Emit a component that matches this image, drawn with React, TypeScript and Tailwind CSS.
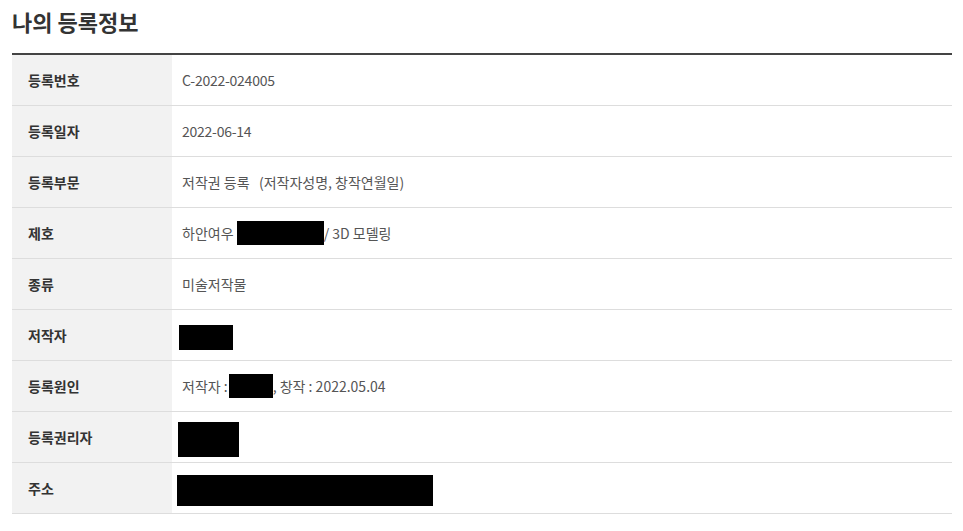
const FONT = { fontFamily: '"Noto Sans CJK KR", "Noto Sans", sans-serif' };

function Blk({ w, h, className = "" }: { w: string; h: string; className?: string }) {
  return <span className={`inline-block bg-black align-middle ${w} ${h} ${className}`} />;
}

const ROWS: { label: string; value: React.ReactNode }[] = [
  { label: "등록번호", value: <span className="tracking-[-0.25px]">C-2022-024005</span> },
  { label: "등록일자", value: <span className="tracking-[-0.25px]">2022-06-14</span> },
  { label: "등록부문", value: <span className="whitespace-pre">저작권 등록   (저작자성명, 창작연월일)</span> },
  {
    label: "제호",
    value: (
      <span className="flex items-center">
        하안여우&nbsp;<Blk w="w-[87px]" h="h-[24px]" />/ 3D 모델링
      </span>
    ),
  },
  { label: "종류", value: "미술저작물" },
  { label: "저작자", value: <Blk w="w-[54px]" h="h-[25px]" className="ml-[-3px] mt-[5px]" /> },
  {
    label: "등록원인",
    value: (
      <span className="flex items-center">
        저작자 :<Blk w="w-[44px]" h="h-[24px]" className="ml-[1px]" />, 창작 : 2022.05.04
      </span>
    ),
  },
  { label: "등록권리자", value: <Blk w="w-[61px]" h="h-[35px]" className="ml-[-4px] mt-[5px]" /> },
  { label: "주소", value: <Blk w="w-[256px]" h="h-[31px]" className="ml-[-5px] mt-[5px]" /> },
];

export default function App() {
  return (
    <div className="bg-white w-[963px] h-[531px] px-[12px] pt-[4px]" style={FONT}>
      <h1 className="text-[22px] font-bold text-[#333] leading-[34px]">나의 등록정보</h1>
      <div className="mt-[15px] w-[940px] border-t-2 border-[#444]">
        {ROWS.map((r) => (
          <div key={r.label} className="flex h-[51px] border-b border-[#ddd]">
            <div className="w-[160px] bg-[#f2f2f2] pl-[16px] flex items-center text-[14px] font-bold text-[#333]">
              {r.label}
            </div>
            <div className="flex-1 pl-[10px] flex items-center text-[14px] text-[#555]">{r.value}</div>
          </div>
        ))}
      </div>
    </div>
  );
}
